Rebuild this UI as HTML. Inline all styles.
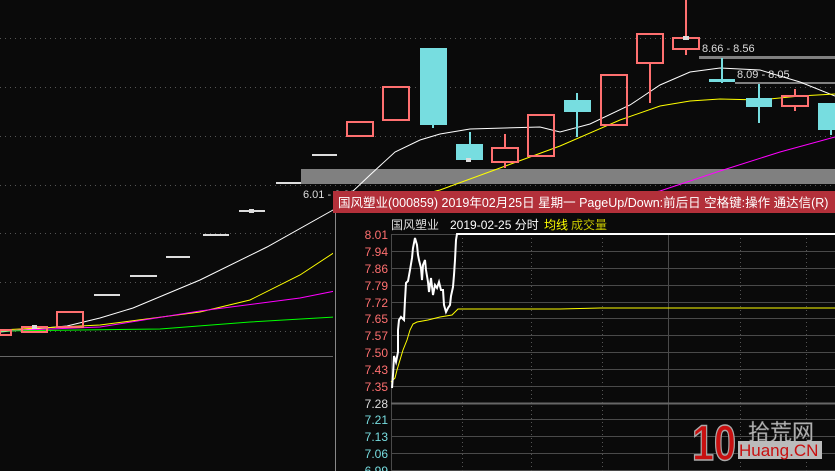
<!DOCTYPE html>
<html><head><meta charset="utf-8"><style>
html,body{margin:0;padding:0;background:#0a0a0a;width:835px;height:471px;overflow:hidden}
svg{display:block}
text{font-family:"Liberation Sans","Noto Sans CJK SC",sans-serif}
</style></head><body>
<svg width="835" height="471" viewBox="0 0 835 471" xmlns="http://www.w3.org/2000/svg">
<rect width="835" height="471" fill="#0a0a0a"/>
<g stroke="#555" stroke-width="1" stroke-dasharray="1,4">
<line x1="0" y1="38.5" x2="835" y2="38.5"/><line x1="0" y1="87.5" x2="835" y2="87.5"/>
<line x1="0" y1="136.5" x2="835" y2="136.5"/><line x1="0" y1="185.5" x2="835" y2="185.5"/>
<line x1="0" y1="233.5" x2="835" y2="233.5"/><line x1="0" y1="282.5" x2="835" y2="282.5"/>
<line x1="0" y1="331.5" x2="835" y2="331.5"/>
</g>
<line x1="0" y1="356.5" x2="835" y2="356.5" stroke="#666"/>
<rect x="301" y="169" width="534" height="15" fill="#808080"/>
<rect x="699" y="56" width="136" height="3" fill="#808080"/>
<rect x="735" y="82" width="100" height="2" fill="#808080"/>
<text x="303" y="198" fill="#ddd" font-size="11">6.01 - 6.02</text>
<text x="702" y="52" fill="#ddd" font-size="11">8.66 - 8.56</text>
<text x="737" y="78" fill="#ddd" font-size="11">8.09 - 8.05</text>
<polyline fill="none" stroke="#ffffff" stroke-width="1" points="0,332 67,326 100,318 133,308 200,280 267,247 333,210 370,175 395,152 420,140 440,134 470,129 540,127 560,132 590,124 630,105 660,85 690,72 720,68 760,70 800,82 835,96"/>
<polyline fill="none" stroke="#ffff00" stroke-width="1" points="0,330 100,325 200,312 250,300 300,275 335,252 420,195 440,190 500,168 560,146 620,120 660,106 690,101 720,99 760,100 800,96 835,94"/>
<polyline fill="none" stroke="#ff00ff" stroke-width="1" points="0,331 100,327 200,311 300,298 335,291 420,240 660,191 720,171 780,152 835,137"/>
<polyline fill="none" stroke="#00ff00" stroke-width="1" points="0,331 160,329 250,322 335,317"/>
<g fill="none" stroke="#ff7070" stroke-width="2">
<rect x="0" y="330" width="11" height="5"/>
<rect x="22" y="327" width="25" height="5"/>
<rect x="57" y="312" width="26" height="15"/>
<rect x="347" y="122" width="26" height="14"/>
<rect x="383" y="87" width="26" height="33"/>
<rect x="492" y="148" width="26" height="14"/>
<rect x="528" y="115" width="26" height="41"/>
<rect x="601" y="75" width="26" height="50"/>
<rect x="637" y="34" width="26" height="29"/>
<rect x="673" y="38" width="26" height="11"/>
<rect x="782" y="96" width="26" height="10"/>
</g>
<g stroke="#ff7070" stroke-width="2">
<line x1="505" y1="134" x2="505" y2="147"/><line x1="505" y1="163" x2="505" y2="168"/>
<line x1="650" y1="64" x2="650" y2="103"/>
<line x1="686" y1="0" x2="686" y2="37"/><line x1="686" y1="50" x2="686" y2="55"/>
<line x1="795" y1="89" x2="795" y2="95"/><line x1="795" y1="107" x2="795" y2="111"/>
</g>
<g fill="#ddd">
<rect x="94" y="294" width="26" height="2"/><rect x="130" y="275" width="27" height="2"/>
<rect x="166" y="256" width="24" height="2"/><rect x="203" y="234" width="26" height="2"/>
<rect x="239" y="210" width="26" height="2"/><rect x="249" y="209" width="5" height="4"/>
<rect x="276" y="182" width="25" height="2"/><rect x="312" y="154" width="25" height="2"/>
<rect x="32" y="325" width="5" height="4"/>
</g>
<g fill="#77dde0">
<rect x="420" y="48" width="27" height="77"/><rect x="432" y="125" width="2" height="3"/>
<rect x="456" y="144" width="27" height="16"/><rect x="469" y="132" width="2" height="12"/>
<rect x="564" y="100" width="27" height="12"/><rect x="576" y="93" width="2" height="44"/>
<rect x="709" y="79" width="26" height="3"/><rect x="721" y="58" width="2" height="25"/>
<rect x="746" y="98" width="26" height="9"/><rect x="758" y="84" width="2" height="39"/>
<rect x="818" y="103" width="17" height="27"/><rect x="830" y="130" width="2" height="5"/>
</g>
<rect x="466" y="158" width="5" height="4" fill="#ddd"/>
<rect x="683" y="36" width="6" height="4" fill="#ddd"/>
<rect x="333" y="191" width="502" height="280" fill="#0a0a0a"/>
<line x1="335.5" y1="191" x2="335.5" y2="471" stroke="#888"/>
<rect x="333" y="191" width="502" height="22" fill="#b3303a"/>
<text x="338" y="207" fill="#fff" font-size="12.5">国风塑业(000859) 2019年02月25日 星期一 PageUp/Down:前后日 空格键:操作 通达信(R)</text>
<text x="391" y="229" fill="#ddd" font-size="12">国风塑业</text>
<text x="450" y="229" fill="#fff" font-size="12">2019-02-25 分时</text>
<text x="544" y="229" fill="#ffff00" font-size="12">均线</text>
<text x="571" y="229" fill="#c8c800" font-size="12">成交量</text>
<g stroke="#4a4a4a" stroke-width="1">
<line x1="391" y1="234.5" x2="835" y2="234.5"/><line x1="391" y1="251.5" x2="835" y2="251.5"/>
<line x1="391" y1="268.5" x2="835" y2="268.5"/><line x1="391" y1="285.5" x2="835" y2="285.5"/>
<line x1="391" y1="302.5" x2="835" y2="302.5"/><line x1="391" y1="318.5" x2="835" y2="318.5"/>
<line x1="391" y1="335.5" x2="835" y2="335.5"/><line x1="391" y1="352.5" x2="835" y2="352.5"/>
<line x1="391" y1="369.5" x2="835" y2="369.5"/><line x1="391" y1="386.5" x2="835" y2="386.5"/>
<line x1="391" y1="419.5" x2="835" y2="419.5"/><line x1="391" y1="436.5" x2="835" y2="436.5"/>
<line x1="391" y1="453.5" x2="835" y2="453.5"/><line x1="391" y1="470.5" x2="835" y2="470.5"/>
<line x1="391.5" y1="234" x2="391.5" y2="471"/><line x1="668.5" y1="234" x2="668.5" y2="471"/>
</g>
<line x1="391" y1="403.5" x2="835" y2="403.5" stroke="#666" stroke-width="2"/>
<g stroke="#555" stroke-dasharray="1,3">
<line x1="462.5" y1="234" x2="462.5" y2="471"/><line x1="531.5" y1="234" x2="531.5" y2="471"/>
<line x1="602.5" y1="234" x2="602.5" y2="471"/><line x1="740.5" y1="234" x2="740.5" y2="471"/>
<line x1="806.5" y1="234" x2="806.5" y2="471"/>
</g>
<g font-size="12" text-anchor="end">
<g fill="#ff7070">
<text x="388" y="239">8.01</text><text x="388" y="256">7.94</text><text x="388" y="273">7.86</text>
<text x="388" y="290">7.79</text><text x="388" y="307">7.72</text><text x="388" y="323">7.65</text>
<text x="388" y="340">7.57</text><text x="388" y="357">7.50</text><text x="388" y="374">7.43</text>
<text x="388" y="391">7.35</text></g>
<text x="388" y="408" fill="#ddd">7.28</text>
<g fill="#77dde0"><text x="388" y="424">7.21</text><text x="388" y="441">7.13</text>
<text x="388" y="458">7.06</text><text x="388" y="475">6.99</text></g>
</g>
<polyline fill="none" stroke="#ffff00" stroke-width="1" points="391,382 395,378 397,370 400,360 403,350 407,340 410,330 413,324 417,322 428,320 440,317 452,315 456,311 458,309 560,309 600,308 835,308"/>
<polyline fill="none" stroke="#ffffff" stroke-width="2" points="392,388 393,375 394,356 396,362 398,352 398,330 399,320 401,317 404,320 405,300 406,283 408,281 410,270 412,258 413,248 415,238 417,245 418,255 419,260 421,268 422,280 423,265 425,260 426,270 428,282 429,292 431,278 433,295 435,285 437,288 439,282 441,290 443,290 444,305 446,312 448,308 450,305 451,296 453,287 454,275 455,260 456,240 457,234 835,234"/>
<g>
<text x="692" y="460" font-size="50" font-weight="bold" fill="#c81010" stroke="#aaa" stroke-width="1.5" textLength="44" lengthAdjust="spacingAndGlyphs">10</text>
<text x="748" y="440" font-size="22" fill="#bbb" stroke="#666" stroke-width="0.5">拾荒网</text>
<rect x="738" y="441" width="84" height="18" fill="#bbb"/>
<text x="739" y="456" font-size="17" fill="#c81010">Huang.CN</text>
</g>
</svg>
</body></html>
